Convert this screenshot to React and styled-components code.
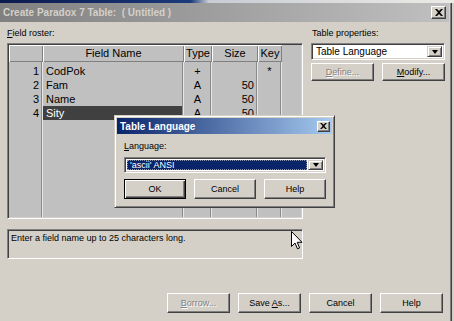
import React from "react";
import styled, { createGlobalStyle, css } from "styled-components";

const GlobalStyle = createGlobalStyle`
  html, body { margin: 0; padding: 0; background: #d4d0c8; overflow: hidden; }
  body { font-family: "Liberation Sans", Arial, sans-serif; }
  * { box-sizing: border-box; }
`;

const SMALL = `9px "Liberation Sans", Arial, sans-serif`;

const Root = styled.div`
  position: relative;
  width: 454px;
  height: 321px;
  overflow: hidden;
  background: #d4d0c8;
`;

const BackStrip = styled.div`
  height: 3px;
  background: linear-gradient(to right, #0b1a4e 0%, #1c3a7a 42%, #c8ccd4 46%, #ecebe6 100%);
`;

const Window = styled.div`
  width: 452px;
  height: 318px;
  display: flex;
  flex-direction: column;
  border-right: 1px solid #404040;
  box-shadow: inset -1px 0 #808080;
`;

const TitleBar = styled.div`
  height: 19px;
  margin-right: 2px;
  padding: 0 3px 0 3px;
  display: flex;
  align-items: center;
  justify-content: space-between;
  background: ${(p) =>
    p.$active
      ? "linear-gradient(to right, #0a246a, #a6caf0)"
      : "linear-gradient(to right, #808080, #c0c0c0)"};
  color: ${(p) => (p.$active ? "#ffffff" : "#d4d0c8")};
  font: bold 10px "Liberation Sans", Arial, sans-serif;
  white-space: pre;
`;

const CloseBox = styled.div`
  width: ${(p) => p.$w}px;
  height: ${(p) => p.$h}px;
  background: #d4d0c8;
  border: 1px solid;
  border-color: #ffffff #404040 #404040 #ffffff;
  box-shadow: inset -1px -1px #808080;
  display: flex;
  align-items: center;
  justify-content: center;
`;

const Body = styled.div`
  display: grid;
  grid-template-columns: 296px 134px;
  column-gap: 8px;
  padding: 6px 0 0 7px;
`;

const Column = styled.div`
  display: flex;
  flex-direction: column;
`;

const Label = styled.div`
  height: 14px;
  line-height: 14px;
  margin-bottom: 1px;
  padding-left: ${(p) => p.$indent || 0}px;
  font: ${SMALL};
  color: #000;
  u { text-decoration: underline; }
`;

const sunken = css`
  border: 1px solid;
  border-color: #808080 #ffffff #ffffff #808080;
  box-shadow: inset 1px 1px #404040, inset -1px -1px #d4d0c8;
`;

const Roster = styled.div`
  ${sunken};
  height: 176px;
  padding: 1px;
  background: #c0c0c0;
`;

const RosterGrid = styled.div`
  height: 100%;
  display: grid;
  grid-template-columns: 34px 141px 28px 46px 24px 1fr;
  grid-template-rows: 17px 16px 14px 14px 14px 1fr;
  font: 11px "Liberation Sans", Arial, sans-serif;
  color: #000;
`;

const HeadCell = styled.div`
  background: #c0c0c0;
  box-shadow: inset 1px 1px #ffffff, inset -1px -1px #808080;
  text-align: center;
  line-height: 16px;
  white-space: nowrap;
  overflow: hidden;
`;

const Cell = styled.div`
  line-height: 14px;
  padding: ${(p) => (p.$first ? "2px" : "0")} 4px 0 3px;
  text-align: ${(p) => p.$align || "left"};
  white-space: nowrap;
  background: ${(p) => (p.$selected ? "#404040" : "transparent")};
  color: ${(p) => (p.$selected ? "#ffffff" : "#000")};
  box-shadow: ${(p) => (p.$plain ? "none" : "inset -1px 0 #e6e6e6, inset -2px 0 #8a8a8a")};
`;

const StatusBox = styled.div`
  ${sunken};
  margin-top: 10px;
  height: 30px;
  padding: 3px 3px;
  font: ${SMALL};
  line-height: 11px;
  color: #000;
`;

const SelectBox = styled.div`
  ${sunken};
  height: ${(p) => p.$h}px;
  background: #ffffff;
  display: flex;
  align-items: stretch;
  padding: 2px;
`;

const SelectText = styled.div`
  flex: 1;
  display: flex;
  align-items: center;
  padding-left: 2px;
  font: ${(p) => (p.$focus ? SMALL : `10px "Liberation Sans", Arial, sans-serif`)};
  color: ${(p) => (p.$focus ? "#ffffff" : "#000")};
  background: ${(p) => (p.$focus ? "#0a246a" : "transparent")};
  border: ${(p) => (p.$focus ? "1px dotted #8a94b0" : "none")};
  margin-right: 1px;
`;

const DropButton = styled.div`
  width: 15px;
  background: #d4d0c8;
  border: 1px solid;
  border-color: #d4d0c8 #404040 #404040 #d4d0c8;
  box-shadow: inset 1px 1px #ffffff, inset -1px -1px #808080;
  display: flex;
  align-items: center;
  justify-content: center;
`;

const Arrow = styled.div`
  width: 0;
  height: 0;
  border-left: 3.5px solid transparent;
  border-right: 3.5px solid transparent;
  border-top: 4px solid #000;
`;

const ButtonRow = styled.div`
  display: flex;
  justify-content: ${(p) => p.$justify || "flex-end"};
  gap: ${(p) => p.$gap || 8}px;
  margin-top: ${(p) => p.$mt || 0}px;
  padding-right: ${(p) => p.$pr || 0}px;
`;

const Button = styled.div`
  width: ${(p) => p.$w || 63}px;
  height: ${(p) => p.$h || 20}px;
  display: flex;
  align-items: center;
  justify-content: center;
  background: #d4d0c8;
  font: ${SMALL};
  color: ${(p) => (p.$disabled ? "#808080" : "#000")};
  text-shadow: ${(p) => (p.$disabled ? "1px 1px #ffffff" : "none")};
  ${(p) =>
    p.$default
      ? css`
          border: 1px solid #000;
          box-shadow: inset 1px 1px #ffffff, inset -1px -1px #404040, inset -2px -2px #808080;
        `
      : css`
          border: 1px solid;
          border-color: #ffffff #404040 #404040 #ffffff;
          box-shadow: inset -1px -1px #808080;
        `}
  u { text-decoration: underline; }
`;

const Dialog = styled.div`
  position: absolute;
  left: 114px;
  top: 115px;
  width: 221px;
  height: 93px;
  background: #d4d0c8;
  border: 1px solid;
  border-color: #d4d0c8 #404040 #404040 #d4d0c8;
  box-shadow: inset 1px 1px #ffffff, inset -1px -1px #808080;
  padding: 2px 2px;
  display: flex;
  flex-direction: column;
`;

const DialogTitle = styled(TitleBar)`
  height: 16px;
  margin: 0;
  padding: 0 2px 0 3px;
`;

const DialogContent = styled.div`
  padding: 7px 6px 0 7px;
  display: flex;
  flex-direction: column;
`;

const Cursor = styled.svg`
  position: absolute;
  left: 291px;
  top: 231px;
`;

const XIcon = ({ size = 8 }) => (
  <svg width={size} height={size - 1} viewBox="0 0 8 7">
    <path d="M0 0h2l2 2 2-2h2L5 3.5 8 7H6L4 5 2 7H0l3-3.5z" fill="#000" />
  </svg>
);

const columns = [
  { key: "n", head: "", align: "right" },
  { key: "name", head: "Field Name", align: "left" },
  { key: "type", head: "Type", align: "center" },
  { key: "size", head: "Size", align: "right" },
  { key: "k", head: "Key", align: "center" },
];

const rows = [
  { n: "1", name: "CodPok", type: "+", size: "", k: "*" },
  { n: "2", name: "Fam", type: "A", size: "50", k: "" },
  { n: "3", name: "Name", type: "A", size: "50", k: "" },
  { n: "4", name: "Sity", type: "A", size: "50", k: "", selected: true },
];

export default function App() {
  return (
    <Root>
      <GlobalStyle />
      <BackStrip />
      <Window>
        <TitleBar>
          <span>{"Create Paradox 7 Table:  ( Untitled )"}</span>
          <CloseBox $w={15} $h={13}>
            <XIcon />
          </CloseBox>
        </TitleBar>
        <Body>
          <Column>
            <Label>
              <u>F</u>ield roster:
            </Label>
            <Roster>
              <RosterGrid>
                {columns.map((c) => (
                  <HeadCell key={"h" + c.key}>{c.head}</HeadCell>
                ))}
                <div />
                {rows.map((r, i) => (
                  <React.Fragment key={r.n}>
                    {columns.map((c) => (
                      <Cell
                        key={c.key}
                        $first={i === 0}
                        $align={c.align}
                        $selected={r.selected && c.key === "name"}
                      >
                        {r[c.key]}
                      </Cell>
                    ))}
                    <Cell $plain />
                  </React.Fragment>
                ))}
                {columns.map((c) => (
                  <Cell key={"f" + c.key} />
                ))}
                <Cell $plain />
              </RosterGrid>
            </Roster>
            <StatusBox>Enter a field name up to 25 characters long.</StatusBox>
          </Column>
          <Column>
            <Label $indent={1}>Table properties:</Label>
            <SelectBox $h={17}>
              <SelectText>Table Language</SelectText>
              <DropButton>
                <Arrow />
              </DropButton>
            </SelectBox>
            <ButtonRow $justify="space-between" $gap={0} $mt={3}>
              <Button $h={18} $disabled>
                <span>
                  <u>D</u>efine...
                </span>
              </Button>
              <Button $h={18}>
                <span>
                  <u>M</u>odify...
                </span>
              </Button>
            </ButtonRow>
          </Column>
        </Body>
        <ButtonRow $mt={34} $pr={8}>
          <Button $disabled>
            <span>
              <u>B</u>orrow...
            </span>
          </Button>
          <Button>
            <span>
              Save <u>A</u>s...
            </span>
          </Button>
          <Button>Cancel</Button>
          <Button>Help</Button>
        </ButtonRow>
      </Window>

      <Dialog>
        <DialogTitle $active>
          <span>Table Language</span>
          <CloseBox $w={13} $h={11}>
            <XIcon size={7} />
          </CloseBox>
        </DialogTitle>
        <DialogContent>
          <Label>
            <u>L</u>anguage:
          </Label>
          <SelectBox $h={16} style={{ marginTop: 1 }}>
            <SelectText $focus>'ascii' ANSI</SelectText>
            <DropButton>
              <Arrow />
            </DropButton>
          </SelectBox>
          <ButtonRow $justify="space-between" $gap={0} $mt={6}>
            <Button $w={62} $default>
              OK
            </Button>
            <Button $w={62}>Cancel</Button>
            <Button $w={62}>Help</Button>
          </ButtonRow>
        </DialogContent>
      </Dialog>

      <Cursor width="12" height="19" viewBox="0 0 12 19">
        <path
          d="M0.5 0.5 L0.5 15.5 L4 12 L6.5 17.8 L8.6 16.9 L6.2 11.3 L11 11.3 Z"
          fill="#ffffff"
          stroke="#000"
          strokeWidth="1"
          strokeLinejoin="miter"
        />
      </Cursor>
    </Root>
  );
}
